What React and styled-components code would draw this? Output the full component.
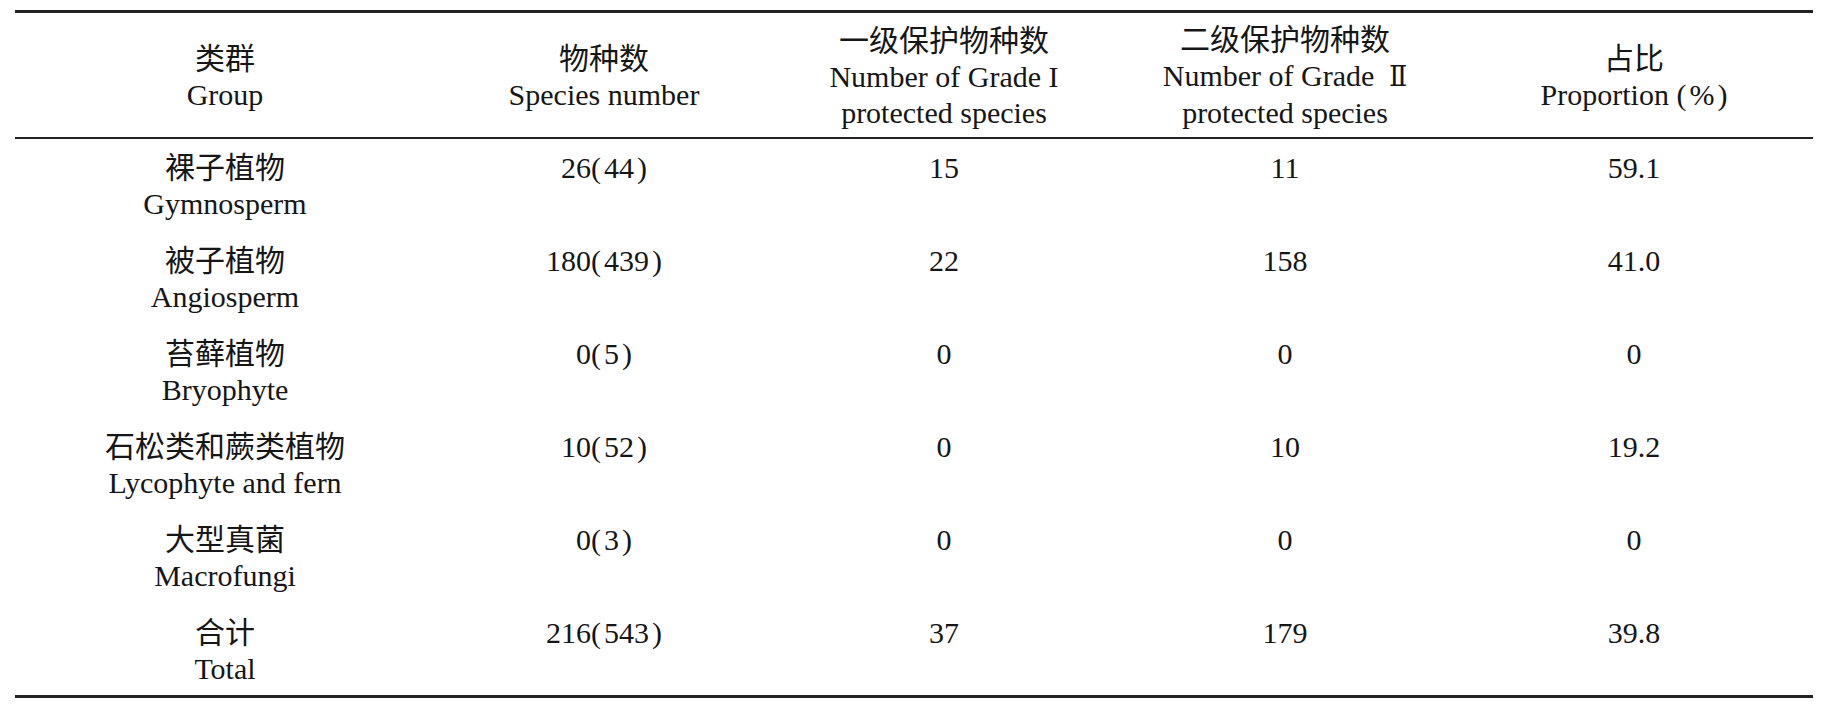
import React from "react";
import styled, { createGlobalStyle } from "styled-components";

const GlobalStyle = createGlobalStyle`
  html, body {
    margin: 0;
    padding: 0;
    background: #ffffff;
  }
  body {
    font-family: "Liberation Serif", "Noto Sans CJK SC", serif;
    color: #161616;
  }
`;

const COLUMNS = "420px 338px 342px 340px 358px";

const Page = styled.div`
  padding: 10px 15px 0 15px;
  width: 1798px;
`;

const Table = styled.div`
  border-top: 3px solid #222;
  border-bottom: 3px solid #222;
`;

const HeadRow = styled.div`
  display: grid;
  grid-template-columns: ${COLUMNS};
  align-items: center;
  height: 126px;
  padding-top: 3px;
  box-sizing: border-box;
  border-bottom: 2px solid #222;
`;

const BodyRow = styled.div`
  display: grid;
  grid-template-columns: ${COLUMNS};
  align-items: start;
  height: ${(p) => (p.$last ? "91px" : "93px")};
  box-sizing: border-box;
  padding: 11px 0 0 0;
`;

const Cell = styled.div`
  text-align: center;
  font-size: 30px;
  line-height: 36px;
  white-space: nowrap;
`;

const Line = styled.div``;

const Inner = styled.span`
  padding: 0 3px;
`;

const Numeral = styled.span`
  font-family: "DejaVu Serif", "Liberation Serif", serif;
  font-size: 27px;
  margin-left: 6px;
`;

const rows = [
  { zh: "裸子植物", en: "Gymnosperm", total: "26", all: "44", g1: "15", g2: "11", pct: "59.1" },
  { zh: "被子植物", en: "Angiosperm", total: "180", all: "439", g1: "22", g2: "158", pct: "41.0" },
  { zh: "苔藓植物", en: "Bryophyte", total: "0", all: "5", g1: "0", g2: "0", pct: "0" },
  { zh: "石松类和蕨类植物", en: "Lycophyte and fern", total: "10", all: "52", g1: "0", g2: "10", pct: "19.2" },
  { zh: "大型真菌", en: "Macrofungi", total: "0", all: "3", g1: "0", g2: "0", pct: "0" },
  { zh: "合计", en: "Total", total: "216", all: "543", g1: "37", g2: "179", pct: "39.8" },
];

function App() {
  return (
    <Page>
      <GlobalStyle />
      <Table>
        <HeadRow>
          <Cell>
            <Line>类群</Line>
            <Line>Group</Line>
          </Cell>
          <Cell>
            <Line>物种数</Line>
            <Line>Species number</Line>
          </Cell>
          <Cell>
            <Line>一级保护物种数</Line>
            <Line>Number of Grade I</Line>
            <Line>protected species</Line>
          </Cell>
          <Cell>
            <Line>二级保护物种数</Line>
            <Line>
              Number of Grade<Numeral> Ⅱ</Numeral>
            </Line>
            <Line>protected species</Line>
          </Cell>
          <Cell>
            <Line>占比</Line>
            <Line>
              Proportion (<Inner>%</Inner>)
            </Line>
          </Cell>
        </HeadRow>
        {rows.map((r, i) => (
          <BodyRow key={r.en} $last={i === rows.length - 1}>
            <Cell>
              <Line>{r.zh}</Line>
              <Line>{r.en}</Line>
            </Cell>
            <Cell>
              {r.total}(<Inner>{r.all}</Inner>)
            </Cell>
            <Cell>{r.g1}</Cell>
            <Cell>{r.g2}</Cell>
            <Cell>{r.pct}</Cell>
          </BodyRow>
        ))}
      </Table>
    </Page>
  );
}

export default App;
